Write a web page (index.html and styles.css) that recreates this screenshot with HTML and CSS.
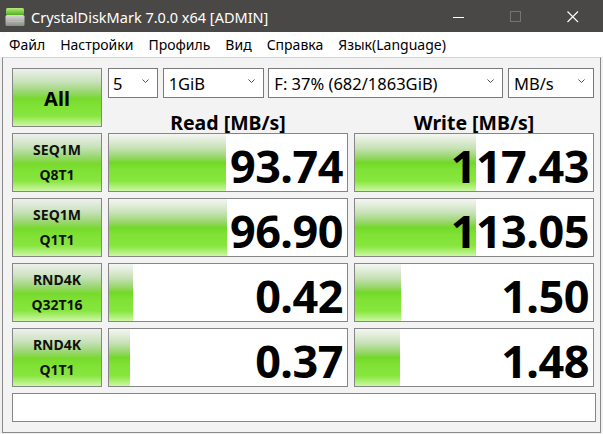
FILE: index.html
```html
<!DOCTYPE html>
<html lang="ru">
<head>
    <meta charset="UTF-8">
    <title>CrystalDiskMark 7.0.0 x64 [ADMIN]</title>
    <link rel="stylesheet" href="styles.css">
</head>
<body>
    <div class="titlebar">
        <svg class="app-icon" width="20" height="20" viewBox="0 0 20 20">
            <defs>
                <linearGradient id="top" x1="0" y1="0" x2="0" y2="1">
                    <stop offset="0" stop-color="#b6ec7c"/>
                    <stop offset="1" stop-color="#4fb01c"/>
                </linearGradient>
                <linearGradient id="body" x1="0" y1="0" x2="0" y2="1">
                    <stop offset="0" stop-color="#d8d8d8"/>
                    <stop offset="1" stop-color="#8c8c8c"/>
                </linearGradient>
            </defs>
            <rect x="1" y="1" width="18" height="7" rx="1.5" fill="url(#top)"/>
            <rect x="0.5" y="8" width="19" height="11" rx="1.5" fill="url(#body)"/>
            <rect x="2" y="14" width="16" height="1" fill="#b8b8b8"/>
            <rect x="14" y="16" width="3" height="1.5" fill="#5ed21e"/>
        </svg>
        <span class="title">CrystalDiskMark 7.0.0 x64 [ADMIN]</span>
        <div class="controls">
            <svg width="12" height="12" viewBox="0 0 12 12"><line x1="0" y1="6.5" x2="11" y2="6.5" stroke="#fff" stroke-width="1"/></svg>
            <svg width="12" height="12" viewBox="0 0 12 12"><rect x="0.5" y="0.5" width="10" height="10" fill="none" stroke="#77746f" stroke-width="1"/></svg>
            <svg width="12" height="12" viewBox="0 0 12 12"><path d="M0.5 0.5 L11 11 M11 0.5 L0.5 11" stroke="#fff" stroke-width="1.1"/></svg>
        </div>
    </div>

    <div class="menubar">
        <span>Файл</span>
        <span>Настройки</span>
        <span>Профиль</span>
        <span>Вид</span>
        <span>Справка</span>
        <span>Язык(Language)</span>
    </div>

    <div class="client">
        <div class="grid">
            <div class="btn all">All</div>
            <div class="head">
                <div class="selects">
                    <div class="select s-count"><span>5</span><svg width="7" height="4" viewBox="0 0 7 4"><polyline points="0.5,0.5 3.5,3.5 6.5,0.5" fill="none" stroke="#555"/></svg></div>
                    <div class="select s-size"><span>1GiB</span><svg width="7" height="4" viewBox="0 0 7 4"><polyline points="0.5,0.5 3.5,3.5 6.5,0.5" fill="none" stroke="#555"/></svg></div>
                    <div class="select s-drive"><span>F: 37% (682/1863GiB)</span><svg width="7" height="4" viewBox="0 0 7 4"><polyline points="0.5,0.5 3.5,3.5 6.5,0.5" fill="none" stroke="#555"/></svg></div>
                    <div class="select s-unit"><span>MB/s</span><svg width="7" height="4" viewBox="0 0 7 4"><polyline points="0.5,0.5 3.5,3.5 6.5,0.5" fill="none" stroke="#555"/></svg></div>
                </div>
                <div class="col-titles">
                    <div>Read [MB/s]</div>
                    <div>Write [MB/s]</div>
                </div>
            </div>

            <div class="btn test">SEQ1M<br>Q8T1</div>
            <div class="result" style="--w:117px">93.74</div>
            <div class="result" style="--w:121px">117.43</div>

            <div class="btn test">SEQ1M<br>Q1T1</div>
            <div class="result" style="--w:118px">96.90</div>
            <div class="result" style="--w:121px">113.05</div>

            <div class="btn test">RND4K<br>Q32T16</div>
            <div class="result" style="--w:24px">0.42</div>
            <div class="result" style="--w:46px">1.50</div>

            <div class="btn test">RND4K<br>Q1T1</div>
            <div class="result" style="--w:21px">0.37</div>
            <div class="result" style="--w:45px">1.48</div>
        </div>
        <div class="comment"></div>
    </div>
</body>
</html>
```
FILE: styles.css
```css
body {
    margin: 0;
    width: 603px;
    height: 434px;
    overflow: hidden;
    background: #f0f0f0;
    font-family: "Noto Sans", "Open Sans", sans-serif;
    color: #000;
}

/* window title */
.titlebar {
    height: 32px;
    background: #4a4846;
    display: flex;
    align-items: center;
    padding-left: 5px;
}

.app-icon {
    margin-top: 1px;
}

.title {
    color: #fff;
    font-size: 14.5px;
    margin-left: 6px;
    margin-top: 2px;
}

.controls {
    margin-left: auto;
    display: flex;
    gap: 45px;
    padding-right: 24px;
    margin-top: 2px;
}

.controls svg {
    width: 12px;
    height: 12px;
}

/* menu */
.menubar {
    height: 25px;
    background: #fff;
    display: flex;
    align-items: center;
    padding-left: 9px;
    gap: 15px;
    font-size: 14px;
}

.client {
    margin-left: 2px;
    width: 584px;
    border: 1px solid #8a8a8a;
    border-top-color: #d4d4d4;
    background: #f3f3f3;
    padding: 10px 4px 10px 9px;
}

.grid {
    display: grid;
    grid-template-columns: 90px 240px 240px;
    grid-template-rows: repeat(5, 59px);
    gap: 6px;
}

.btn {
    border: 1px solid #868686;
    background: linear-gradient(to bottom, #eef0ec 0%, #c9e2bc 22%, #9bd672 40%, #77da2c 52%, #80e235 65%, #88e540 82%, #cef7a8 100%);
    display: flex;
    align-items: center;
    justify-content: center;
    text-align: center;
    font-weight: bold;
}

.btn.all {
    font-size: 20px;
    padding-top: 2px;
}

.btn.test {
    font-size: 14px;
    line-height: 25px;
    color: #111;
    padding-bottom: 2px;
}

.head {
    grid-column: 2 / 4;
    display: flex;
    flex-direction: column;
}

.selects {
    display: flex;
    justify-content: space-between;
    height: 30px;
}

.select {
    box-sizing: border-box;
    height: 30px;
    border: 1px solid #7a7a7a;
    background: #fff;
    display: flex;
    align-items: center;
    padding: 0 8px 0 5px;
    font-size: 16.5px;
}

.select span {
    flex: 1;
}

.select svg {
    margin-top: -4px;
}

.s-count { width: 50px; padding-left: 4px; }
.s-size { width: 101px; }
.s-drive { width: 235px; }
.s-unit { width: 86px; }

.col-titles {
    flex: 1;
    display: grid;
    grid-template-columns: 240px 240px;
    gap: 6px;
    align-items: center;
    text-align: center;
    font-weight: bold;
    font-size: 19.5px;
    padding-top: 11px;
}

.result {
    border: 1px solid #868686;
    background-color: #fff;
    background-image: linear-gradient(to bottom, #f5f6f3 0%, #c8e2b8 24%, #93d663 42%, #72d928 50%, #7fe234 62%, #86e63d 82%, #cbf7a4 100%);
    background-repeat: no-repeat;
    background-size: var(--w) 100%;
    display: flex;
    align-items: center;
    justify-content: flex-end;
    padding: 5px 4px 0 0;
    font-weight: bold;
    font-size: 45px;
    line-height: 1;
    letter-spacing: -0.5px;
}

.comment {
    margin-top: 6px;
    height: 27px;
    border: 1px solid #868686;
    background: #fff;
}
```
